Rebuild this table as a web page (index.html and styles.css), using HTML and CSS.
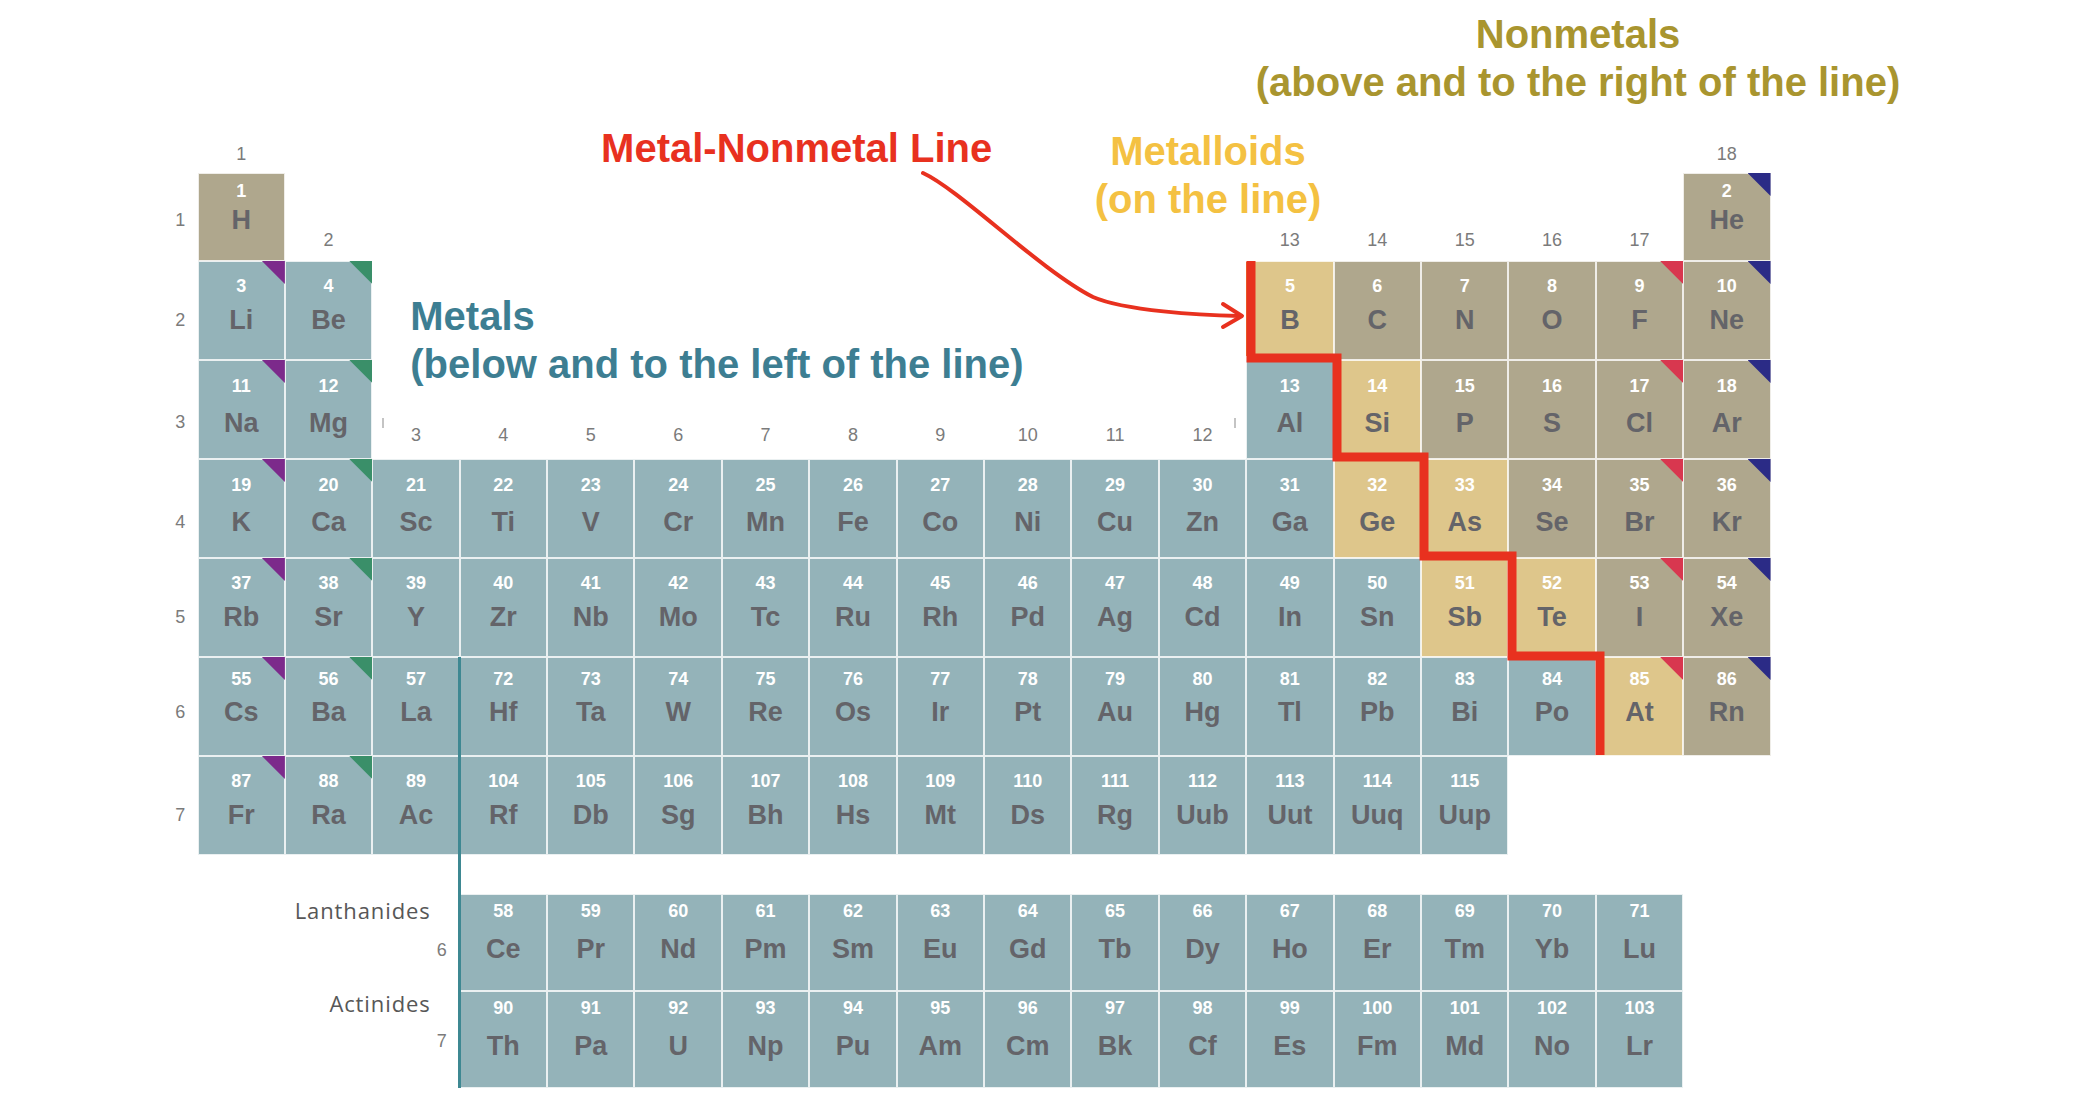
FILE: index.html
```html
<!DOCTYPE html>
<html lang="en">
<head>
<meta charset="utf-8">
<title>Metals, Metalloids and Nonmetals</title>
<link rel="stylesheet" href="styles.css">
</head>
<body>
<header class="nonmetals-title">Nonmetals<br>(above and to the right of the line)</header>
<main class="ptable">
  <div class="ann ann-line">Metal-Nonmetal Line</div>
  <div class="ann ann-metalloids">Metalloids<br>(on the line)</div>
  <div class="ann ann-metals">Metals<br>(below and to the left of the line)</div>
  <div class="fblock-line"></div>

  <div class="period r0">
    <div class="grp c1">1</div>
    <div class="grp c18">18</div>
  </div>

  <div class="period r1">
    <div class="pl">1</div>
    <div class="el nm c1"><span class="n">1</span><span class="s">H</span></div>
    <div class="grp c2">2</div>
    <div class="grp c13">13</div>
    <div class="grp c14">14</div>
    <div class="grp c15">15</div>
    <div class="grp c16">16</div>
    <div class="grp c17">17</div>
    <div class="el nm ng c18"><span class="n">2</span><span class="s">He</span></div>
  </div>

  <div class="period r2">
    <div class="pl">2</div>
    <div class="el ak c1"><span class="n">3</span><span class="s">Li</span></div>
    <div class="el ae c2"><span class="n">4</span><span class="s">Be</span></div>
    <div class="el md c13"><span class="n">5</span><span class="s">B</span></div>
    <div class="el nm c14"><span class="n">6</span><span class="s">C</span></div>
    <div class="el nm c15"><span class="n">7</span><span class="s">N</span></div>
    <div class="el nm c16"><span class="n">8</span><span class="s">O</span></div>
    <div class="el nm hg c17"><span class="n">9</span><span class="s">F</span></div>
    <div class="el nm ng c18"><span class="n">10</span><span class="s">Ne</span></div>
  </div>

  <div class="period r3">
    <div class="pl">3</div>
    <div class="el ak c1"><span class="n">11</span><span class="s">Na</span></div>
    <div class="el ae c2"><span class="n">12</span><span class="s">Mg</span></div>
    <div class="tick tick-l c3"></div>
    <div class="grp c3">3</div>
    <div class="grp c4">4</div>
    <div class="grp c5">5</div>
    <div class="grp c6">6</div>
    <div class="grp c7">7</div>
    <div class="grp c8">8</div>
    <div class="grp c9">9</div>
    <div class="grp c10">10</div>
    <div class="grp c11">11</div>
    <div class="grp c12">12</div>
    <div class="tick tick-r c12"></div>
    <div class="el c13"><span class="n">13</span><span class="s">Al</span></div>
    <div class="el md c14"><span class="n">14</span><span class="s">Si</span></div>
    <div class="el nm c15"><span class="n">15</span><span class="s">P</span></div>
    <div class="el nm c16"><span class="n">16</span><span class="s">S</span></div>
    <div class="el nm hg c17"><span class="n">17</span><span class="s">Cl</span></div>
    <div class="el nm ng c18"><span class="n">18</span><span class="s">Ar</span></div>
  </div>

  <div class="period r4">
    <div class="pl">4</div>
    <div class="el ak c1"><span class="n">19</span><span class="s">K</span></div>
    <div class="el ae c2"><span class="n">20</span><span class="s">Ca</span></div>
    <div class="el c3"><span class="n">21</span><span class="s">Sc</span></div>
    <div class="el c4"><span class="n">22</span><span class="s">Ti</span></div>
    <div class="el c5"><span class="n">23</span><span class="s">V</span></div>
    <div class="el c6"><span class="n">24</span><span class="s">Cr</span></div>
    <div class="el c7"><span class="n">25</span><span class="s">Mn</span></div>
    <div class="el c8"><span class="n">26</span><span class="s">Fe</span></div>
    <div class="el c9"><span class="n">27</span><span class="s">Co</span></div>
    <div class="el c10"><span class="n">28</span><span class="s">Ni</span></div>
    <div class="el c11"><span class="n">29</span><span class="s">Cu</span></div>
    <div class="el c12"><span class="n">30</span><span class="s">Zn</span></div>
    <div class="el c13"><span class="n">31</span><span class="s">Ga</span></div>
    <div class="el md c14"><span class="n">32</span><span class="s">Ge</span></div>
    <div class="el md c15"><span class="n">33</span><span class="s">As</span></div>
    <div class="el nm c16"><span class="n">34</span><span class="s">Se</span></div>
    <div class="el nm hg c17"><span class="n">35</span><span class="s">Br</span></div>
    <div class="el nm ng c18"><span class="n">36</span><span class="s">Kr</span></div>
  </div>

  <div class="period r5">
    <div class="pl">5</div>
    <div class="el ak c1"><span class="n">37</span><span class="s">Rb</span></div>
    <div class="el ae c2"><span class="n">38</span><span class="s">Sr</span></div>
    <div class="el c3"><span class="n">39</span><span class="s">Y</span></div>
    <div class="el c4"><span class="n">40</span><span class="s">Zr</span></div>
    <div class="el c5"><span class="n">41</span><span class="s">Nb</span></div>
    <div class="el c6"><span class="n">42</span><span class="s">Mo</span></div>
    <div class="el c7"><span class="n">43</span><span class="s">Tc</span></div>
    <div class="el c8"><span class="n">44</span><span class="s">Ru</span></div>
    <div class="el c9"><span class="n">45</span><span class="s">Rh</span></div>
    <div class="el c10"><span class="n">46</span><span class="s">Pd</span></div>
    <div class="el c11"><span class="n">47</span><span class="s">Ag</span></div>
    <div class="el c12"><span class="n">48</span><span class="s">Cd</span></div>
    <div class="el c13"><span class="n">49</span><span class="s">In</span></div>
    <div class="el c14"><span class="n">50</span><span class="s">Sn</span></div>
    <div class="el md c15"><span class="n">51</span><span class="s">Sb</span></div>
    <div class="el md c16"><span class="n">52</span><span class="s">Te</span></div>
    <div class="el nm hg c17"><span class="n">53</span><span class="s">I</span></div>
    <div class="el nm ng c18"><span class="n">54</span><span class="s">Xe</span></div>
  </div>

  <div class="period r6">
    <div class="pl">6</div>
    <div class="el ak c1"><span class="n">55</span><span class="s">Cs</span></div>
    <div class="el ae c2"><span class="n">56</span><span class="s">Ba</span></div>
    <div class="el c3"><span class="n">57</span><span class="s">La</span></div>
    <div class="el c4"><span class="n">72</span><span class="s">Hf</span></div>
    <div class="el c5"><span class="n">73</span><span class="s">Ta</span></div>
    <div class="el c6"><span class="n">74</span><span class="s">W</span></div>
    <div class="el c7"><span class="n">75</span><span class="s">Re</span></div>
    <div class="el c8"><span class="n">76</span><span class="s">Os</span></div>
    <div class="el c9"><span class="n">77</span><span class="s">Ir</span></div>
    <div class="el c10"><span class="n">78</span><span class="s">Pt</span></div>
    <div class="el c11"><span class="n">79</span><span class="s">Au</span></div>
    <div class="el c12"><span class="n">80</span><span class="s">Hg</span></div>
    <div class="el c13"><span class="n">81</span><span class="s">Tl</span></div>
    <div class="el c14"><span class="n">82</span><span class="s">Pb</span></div>
    <div class="el c15"><span class="n">83</span><span class="s">Bi</span></div>
    <div class="el c16"><span class="n">84</span><span class="s">Po</span></div>
    <div class="el md hg c17"><span class="n">85</span><span class="s">At</span></div>
    <div class="el nm ng c18"><span class="n">86</span><span class="s">Rn</span></div>
  </div>

  <div class="period r7">
    <div class="pl">7</div>
    <div class="el ak c1"><span class="n">87</span><span class="s">Fr</span></div>
    <div class="el ae c2"><span class="n">88</span><span class="s">Ra</span></div>
    <div class="el c3"><span class="n">89</span><span class="s">Ac</span></div>
    <div class="el c4"><span class="n">104</span><span class="s">Rf</span></div>
    <div class="el c5"><span class="n">105</span><span class="s">Db</span></div>
    <div class="el c6"><span class="n">106</span><span class="s">Sg</span></div>
    <div class="el c7"><span class="n">107</span><span class="s">Bh</span></div>
    <div class="el c8"><span class="n">108</span><span class="s">Hs</span></div>
    <div class="el c9"><span class="n">109</span><span class="s">Mt</span></div>
    <div class="el c10"><span class="n">110</span><span class="s">Ds</span></div>
    <div class="el c11"><span class="n">111</span><span class="s">Rg</span></div>
    <div class="el c12"><span class="n">112</span><span class="s">Uub</span></div>
    <div class="el c13"><span class="n">113</span><span class="s">Uut</span></div>
    <div class="el c14"><span class="n">114</span><span class="s">Uuq</span></div>
    <div class="el c15"><span class="n">115</span><span class="s">Uup</span></div>
  </div>

  <div class="period r8">
    <div class="series"><span class="series-name">Lanthanides</span><span class="series-num">6</span></div>
    <div class="el c4"><span class="n">58</span><span class="s">Ce</span></div>
    <div class="el c5"><span class="n">59</span><span class="s">Pr</span></div>
    <div class="el c6"><span class="n">60</span><span class="s">Nd</span></div>
    <div class="el c7"><span class="n">61</span><span class="s">Pm</span></div>
    <div class="el c8"><span class="n">62</span><span class="s">Sm</span></div>
    <div class="el c9"><span class="n">63</span><span class="s">Eu</span></div>
    <div class="el c10"><span class="n">64</span><span class="s">Gd</span></div>
    <div class="el c11"><span class="n">65</span><span class="s">Tb</span></div>
    <div class="el c12"><span class="n">66</span><span class="s">Dy</span></div>
    <div class="el c13"><span class="n">67</span><span class="s">Ho</span></div>
    <div class="el c14"><span class="n">68</span><span class="s">Er</span></div>
    <div class="el c15"><span class="n">69</span><span class="s">Tm</span></div>
    <div class="el c16"><span class="n">70</span><span class="s">Yb</span></div>
    <div class="el c17"><span class="n">71</span><span class="s">Lu</span></div>
  </div>

  <div class="period r9">
    <div class="series"><span class="series-name">Actinides</span><span class="series-num">7</span></div>
    <div class="el c4"><span class="n">90</span><span class="s">Th</span></div>
    <div class="el c5"><span class="n">91</span><span class="s">Pa</span></div>
    <div class="el c6"><span class="n">92</span><span class="s">U</span></div>
    <div class="el c7"><span class="n">93</span><span class="s">Np</span></div>
    <div class="el c8"><span class="n">94</span><span class="s">Pu</span></div>
    <div class="el c9"><span class="n">95</span><span class="s">Am</span></div>
    <div class="el c10"><span class="n">96</span><span class="s">Cm</span></div>
    <div class="el c11"><span class="n">97</span><span class="s">Bk</span></div>
    <div class="el c12"><span class="n">98</span><span class="s">Cf</span></div>
    <div class="el c13"><span class="n">99</span><span class="s">Es</span></div>
    <div class="el c14"><span class="n">100</span><span class="s">Fm</span></div>
    <div class="el c15"><span class="n">101</span><span class="s">Md</span></div>
    <div class="el c16"><span class="n">102</span><span class="s">No</span></div>
    <div class="el c17"><span class="n">103</span><span class="s">Lr</span></div>
  </div>
</main>

<svg class="overlay" width="2092" height="1110" viewBox="0 0 2092 1110" aria-hidden="true">
  <path class="stair-edge" d="M1247 262 V356"/>
  <path class="stair" d="M1251 261 V358 H1337 V457 H1424 V556 H1512 V656 H1600 V755"/>
  <path class="arrow" d="M923 173 C960 190 1040 270 1093 297 C1125 311 1200 315 1240 316"/>
  <path class="arrow" d="M1223 304 L1242 316 L1223 327"/>
</svg>
</body>
</html>
```

FILE: styles.css
```css
* {
  box-sizing: border-box;
  margin: 0;
  padding: 0;
}

html,
body {
  background: #ffffff;
}

body {
  position: relative;
  width: 2092px;
  height: 1110px;
  overflow: hidden;
  font-family: "Liberation Sans", Arial, Helvetica, sans-serif;
}

/* ---------- headings ---------- */
.nonmetals-title {
  width: 700px;
  height: 106px;
  margin-left: 1228px;
  padding-top: 10px;
  text-align: center;
  white-space: nowrap;
  font-size: 40px;
  line-height: 48px;
  font-weight: bold;
  color: #a9952f;
}

.ann {
  font-size: 40px;
  line-height: 48px;
  font-weight: bold;
  white-space: nowrap;
  align-self: start;
}

.ann-line {
  grid-row: 1 / 3;
  grid-column: 6 / 12;
  margin-left: 54px;
  margin-top: 18px;
  color: #e8311f;
}

.ann-metalloids {
  grid-row: 1 / 3;
  grid-column: 12 / 15;
  margin-left: 11px;
  margin-top: 21px;
  line-height: 48px;
  text-align: center;
  color: #f4c142;
}

.ann-metals {
  grid-row: 3 / 5;
  grid-column: 4 / 12;
  margin-left: 38px;
  margin-top: 31px;
  color: #3d7e92;
}

/* ---------- table grid ---------- */
.ptable {
  display: grid;
  margin-left: 163px;
  grid-template-columns: 34.5px repeat(18, 87.4px);
  grid-template-rows: 67px 88px repeat(6, 99px) 39px 97px 97px;
}

.period {
  display: contents;
}

.r0 > * { grid-row: 1; }
.r1 > * { grid-row: 2; }
.r2 > * { grid-row: 3; }
.r3 > * { grid-row: 4; }
.r4 > * { grid-row: 5; }
.r5 > * { grid-row: 6; }
.r6 > * { grid-row: 7; }
.r7 > * { grid-row: 8; }
.r8 > * { grid-row: 10; }
.r9 > * { grid-row: 11; }

.c1 { grid-column: 2; }
.c2 { grid-column: 3; }
.c3 { grid-column: 4; }
.c4 { grid-column: 5; }
.c5 { grid-column: 6; }
.c6 { grid-column: 7; }
.c7 { grid-column: 8; }
.c8 { grid-column: 9; }
.c9 { grid-column: 10; }
.c10 { grid-column: 11; }
.c11 { grid-column: 12; }
.c12 { grid-column: 13; }
.c13 { grid-column: 14; }
.c14 { grid-column: 15; }
.c15 { grid-column: 16; }
.c16 { grid-column: 17; }
.c17 { grid-column: 18; }
.c18 { grid-column: 19; }

/* ---------- element cells ---------- */
.el {
  position: relative;
  display: flex;
  flex-direction: column;
  align-items: center;
  padding-top: 14px;
  border: 1px solid rgba(255, 255, 255, 0.8);
  background: #94b3b9;
}

.el.nm { background: #afa78d; }
.el.md { background: #dec68b; }

.el .n {
  font-size: 18px;
  line-height: 20px;
  font-weight: bold;
  color: #ffffff;
}

.el .s {
  margin-top: 8px;
  font-size: 27px;
  line-height: 32px;
  font-weight: bold;
  color: #646469;
}

.r1 .el { padding-top: 7px; }
.r1 .el .s { margin-top: 3px; }
.r3 .el,
.r4 .el { padding-top: 15px; }
.r3 .el .s,
.r4 .el .s { margin-top: 11px; }
.r6 .el { padding-top: 11px; }
.r6 .el .s { margin-top: 7px; }
.r8 .el,
.r9 .el { padding-top: 6px; }
.r8 .el .s,
.r9 .el .s { margin-top: 12px; }

/* family corner flags */
.ak::after,
.ae::after,
.hg::after,
.ng::after {
  content: "";
  position: absolute;
  top: -1px;
  right: -1px;
  width: 23px;
  height: 23px;
  clip-path: polygon(0 0, 100% 0, 100% 100%);
}

.ak::after { background: #7c2a8b; }
.ae::after { background: #3a8f69; }
.hg::after { background: #d8374f; }
.ng::after { background: #2b2b86; }

/* ---------- labels ---------- */
.grp {
  align-self: end;
  text-align: center;
  font-size: 18px;
  line-height: 20px;
  color: #7b7b7b;
}

.r0 .grp { margin-bottom: 9px; }
.r1 .grp { margin-bottom: 11px; }
.r3 .grp { margin-bottom: 14px; }

.pl {
  grid-column: 1;
  align-self: start;
  text-align: center;
  font-size: 18px;
  line-height: 20px;
  color: #7b7b7b;
}

.r1 .pl { margin-top: 37px; }
.r2 .pl { margin-top: 49px; }
.r3 .pl { margin-top: 52px; }
.r4 .pl { margin-top: 53px; }
.r5 .pl { margin-top: 49px; }
.r6 .pl { margin-top: 45px; }
.r7 .pl { margin-top: 49px; }

.tick {
  align-self: end;
  width: 2px;
  height: 10px;
  margin-bottom: 31px;
  background: #c4c4c4;
}

.tick-l {
  justify-self: start;
  margin-left: 10px;
}

.tick-r {
  justify-self: end;
  margin-right: 10px;
}

.series {
  grid-column: 2 / 5;
  display: flex;
  flex-direction: column;
  align-items: flex-end;
  padding-right: 13px;
}

.series-name {
  margin-right: 16px;
  font-family: "Open Sans", "Liberation Sans", sans-serif;
  font-size: 22px;
  line-height: 28px;
  letter-spacing: 0.9px;
  color: #575757;
}

.series-num {
  font-size: 18px;
  line-height: 20px;
  color: #7b7b7b;
}

.r8 .series { padding-top: 2px; }
.r8 .series-num { margin-top: 16px; }
.r9 .series-name { margin-top: -2px; }
.r9 .series-num { margin-top: 14px; }

.fblock-line {
  grid-column: 5;
  grid-row: 7 / 12;
  justify-self: start;
  width: 3px;
  margin-left: -1.5px;
  background: #3e8892;
  z-index: 2;
}

/* ---------- drawn annotations ---------- */
.overlay {
  position: absolute;
  top: 0;
  left: 0;
  pointer-events: none;
  fill: none;
}

.stair {
  stroke: #e8311f;
  stroke-width: 9;
  stroke-linejoin: miter;
}

.stair-edge {
  stroke: #ec7a2e;
  stroke-width: 2;
}

.arrow {
  stroke: #e8311f;
  stroke-width: 4;
  stroke-linecap: round;
  stroke-linejoin: round;
}
```
